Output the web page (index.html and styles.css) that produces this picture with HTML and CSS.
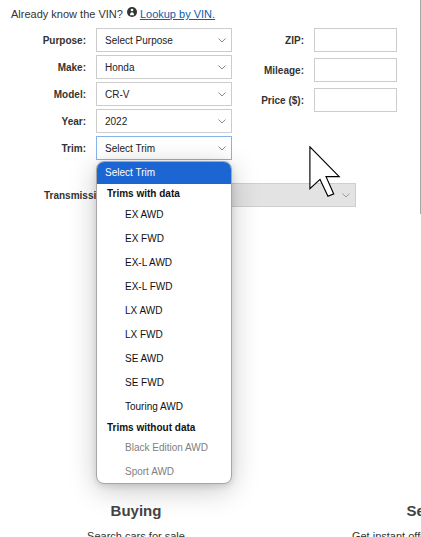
FILE: index.html
```html
<!DOCTYPE html>
<html>
<head>
<meta charset="utf-8">
<link rel="stylesheet" href="styles.css">
</head>
<body>
<div class="panel">
  <div class="vin-line">
    <span>Already know the VIN?</span>
    <svg class="info" width="10" height="10" viewBox="0 0 10 10"><circle cx="5" cy="5" r="5" fill="#333"/><circle cx="5" cy="3" r="1.3" fill="#fff"/><path d="M3 8.3 Q3 5.3 5 5.3 Q7 5.3 7 8.3 Z" fill="#fff"/></svg>
    <a href="#" class="lookup">Lookup by VIN.</a>
  </div>
  <div class="form">
    <div class="col-left">
      <div class="row"><label>Purpose:</label><div class="sel">Select Purpose<svg class="chev" width="8" height="5" viewBox="0 0 8 5"><path d="M0.5 0.5 L4 4 L7.5 0.5" fill="none" stroke="#888" stroke-width="1"/></svg></div></div>
      <div class="row"><label>Make:</label><div class="sel">Honda<svg class="chev" width="8" height="5" viewBox="0 0 8 5"><path d="M0.5 0.5 L4 4 L7.5 0.5" fill="none" stroke="#888" stroke-width="1"/></svg></div></div>
      <div class="row"><label>Model:</label><div class="sel">CR-V<svg class="chev" width="8" height="5" viewBox="0 0 8 5"><path d="M0.5 0.5 L4 4 L7.5 0.5" fill="none" stroke="#888" stroke-width="1"/></svg></div></div>
      <div class="row"><label>Year:</label><div class="sel">2022<svg class="chev" width="8" height="5" viewBox="0 0 8 5"><path d="M0.5 0.5 L4 4 L7.5 0.5" fill="none" stroke="#888" stroke-width="1"/></svg></div></div>
      <div class="row"><label>Trim:</label><div class="sel focus">Select Trim<svg class="chev" width="8" height="5" viewBox="0 0 8 5"><path d="M0.5 0.5 L4 4 L7.5 0.5" fill="none" stroke="#888" stroke-width="1"/></svg></div></div>
    </div>
    <div class="col-right">
      <div class="row2"><label>ZIP:</label><div class="inp"></div></div>
      <div class="row2"><label>Mileage:</label><div class="inp"></div></div>
      <div class="row2"><label>Price ($):</label><div class="inp"></div></div>
    </div>
  </div>
  <div class="trans-row">
    <label>Transmission:</label>
    <div class="sel disabled"><svg class="chev" width="8" height="5" viewBox="0 0 8 5"><path d="M0.5 0.5 L4 4 L7.5 0.5" fill="none" stroke="#999" stroke-width="1"/></svg></div>
  </div>
</div>

<div class="features">
  <div class="feat">
    <h2>Buying</h2>
    <p>Search cars for sale</p>
  </div>
  <div class="feat">
    <h2>Selling</h2>
    <p>Get instant offers to sell your car</p>
  </div>
</div>

<div class="dropdown">
  <div class="opt selected">Select Trim</div>
  <div class="grp">Trims with data</div>
  <div class="opt sub">EX AWD</div>
  <div class="opt sub">EX FWD</div>
  <div class="opt sub">EX-L AWD</div>
  <div class="opt sub">EX-L FWD</div>
  <div class="opt sub">LX AWD</div>
  <div class="opt sub">LX FWD</div>
  <div class="opt sub">SE AWD</div>
  <div class="opt sub">SE FWD</div>
  <div class="opt sub">Touring AWD</div>
  <div class="grp g2">Trims without data</div>
  <div class="opt sub dis">Black Edition AWD</div>
  <div class="opt sub dis">Sport AWD</div>
</div>

<svg class="cursor" width="33" height="52" viewBox="0 0 12 19"><path d="M0.3 0.3 L0.3 15.6 L4 12.2 L6.9 18.4 L9 17.5 L6.2 11.2 L11 11.2 Z" fill="#fff" stroke="#000" stroke-width="0.42" stroke-linejoin="miter"/></svg>
</body>
</html>
```

FILE: styles.css
```css
html, body {
  margin: 0;
  padding: 0;
  background: #fff;
}
body {
  font-family: "Liberation Sans", Arial, sans-serif;
  color: #333;
  width: 421px;
  height: 537px;
  overflow: hidden;
  position: relative;
}
.panel {
  box-sizing: border-box;
  width: 421px;
  height: 214px;
  border-right: 1px solid #a8a8a8;
}
.vin-line {
  font-size: 11px;
  line-height: 14px;
  padding: 5px 0 0 11px;
  height: 23px;
  box-sizing: border-box;
  display: flex;
  align-items: center;
}
.info {
  margin: 0 3px 0 4px;
  position: relative;
  top: -2px;
}
.lookup {
  color: #0b5cad;
  text-decoration: underline;
}
.form {
  display: flex;
  padding-top: 5px;
}
.col-left {
  display: flex;
  flex-direction: column;
  gap: 3px;
}
.row, .row2 {
  display: flex;
  align-items: center;
  gap: 10px;
}
label {
  font-size: 10px;
  font-weight: bold;
  text-align: right;
}
.row label {
  width: 86px;
}
.sel {
  box-sizing: border-box;
  width: 136px;
  height: 24px;
  border: 1px solid #cccccc;
  background: #fff;
  font-size: 10px;
  padding-left: 8px;
  display: flex;
  align-items: center;
  position: relative;
  color: #222;
}
.sel.focus {
  border-color: #86b3ea;
}
.chev {
  position: absolute;
  right: 5px;
  top: 9px;
}
.col-right {
  display: flex;
  flex-direction: column;
  gap: 6px;
}
.row2 label {
  width: 72px;
}
.inp {
  box-sizing: border-box;
  width: 83px;
  height: 24px;
  border: 1px solid #cccccc;
}
.trans-row {
  display: flex;
  align-items: center;
  gap: 10px;
  margin-top: 23px;
  padding-left: 44px;
}
.trans-row label {
  width: auto;
}
.sel.disabled {
  width: 234px;
  height: 24px;
  background: #e3e3e3;
  border-color: #cfcfcf;
}
.features {
  display: flex;
  gap: 23px;
  width: 600px;
  margin-top: 288px;
}
.feat {
  width: 272px;
  flex: none;
  text-align: center;
}
.feat h2 {
  margin: 0;
  font-size: 15px;
  line-height: 18px;
  color: #444;
  font-weight: bold;
}
.feat p {
  margin: 9px 0 0;
  font-size: 11px;
  line-height: 14px;
  white-space: nowrap;
}
.dropdown {
  position: absolute;
  left: 96px;
  top: 161px;
  width: 136px;
  box-sizing: border-box;
  background: #fff;
  border: 1px solid #a6a6a6;
  border-radius: 8px;
  overflow: hidden;
  box-shadow: 0 6px 28px rgba(0,0,0,0.22), 0 2px 6px rgba(0,0,0,0.12);
  font-size: 10px;
  color: #111;
}
.opt {
  height: 24px;
  display: flex;
  align-items: center;
  padding-left: 8px;
}
.opt.selected {
  background: #1b66d2;
  color: #fff;
  height: 23px;
  margin-top: -1px;
  padding-left: 8px;
}
.opt.sub {
  padding-left: 28px;
}
.opt.dis {
  color: #808080;
}
.grp {
  height: 18px;
  display: flex;
  align-items: center;
  padding-left: 10px;
  font-weight: bold;
  padding-top: 1px;
  box-sizing: border-box;
}
.grp.g2 {
  height: 17px;
}
.cursor {
  position: absolute;
  left: 309px;
  top: 146px;
}
```
